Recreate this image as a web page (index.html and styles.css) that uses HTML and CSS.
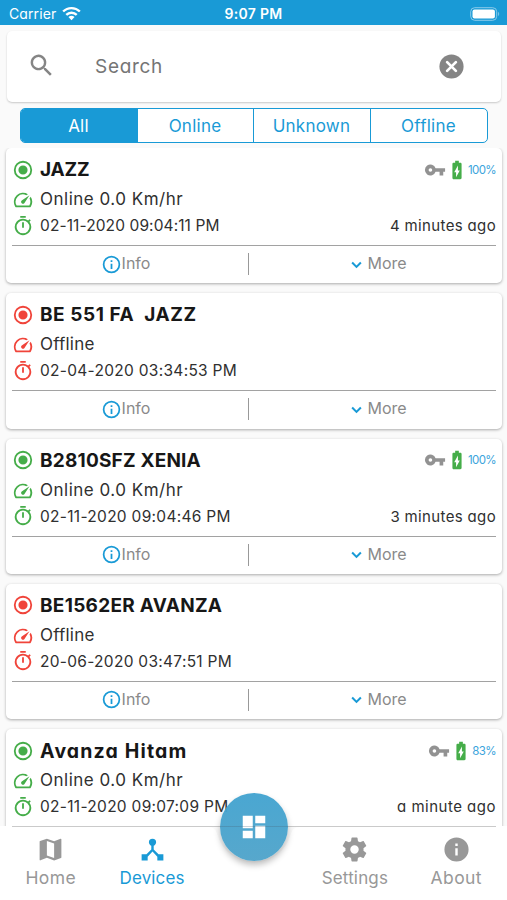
FILE: index.html
```html
<!DOCTYPE html>
<html lang="en">
<head>
<meta charset="utf-8">
<title>Devices</title>
<link rel="stylesheet" href="styles.css">
</head>
<body>
<svg class="defs" width="0" height="0" aria-hidden="true">
  <symbol id="radio" viewBox="0 0 24 24"><path d="M12 7a5 5 0 1 0 0 10 5 5 0 0 0 0-10zm0-5a10 10 0 1 0 0 20 10 10 0 0 0 0-20zm0 18a8 8 0 1 1 0-16 8 8 0 0 1 0 16z" fill-rule="evenodd"/></symbol>
  <symbol id="speed" viewBox="0 0 24 24"><path d="M20.38 8.57l-1.23 1.85a8 8 0 0 1-.22 7.58H5.07A8 8 0 0 1 15.58 6.85l1.85-1.23A10 10 0 0 0 3.35 19a2 2 0 0 0 1.72 1h13.85a2 2 0 0 0 1.74-1 10 10 0 0 0-.27-10.44zm-9.79 6.84a2 2 0 0 0 2.83 0l5.66-8.49-8.49 5.66a2 2 0 0 0 0 2.83z"/></symbol>
  <symbol id="timer" viewBox="0 0 24 24"><path d="M15 1H9v2h6V1zm-4 13h2V8h-2v6zm8.03-6.61l1.42-1.42c-.43-.51-.9-.99-1.41-1.41l-1.42 1.42A8.96 8.96 0 0 0 12 4a9 9 0 1 0 7.03 3.39zM12 20a7 7 0 1 1 0-14 7 7 0 0 1 0 14z"/></symbol>
  <symbol id="key" viewBox="0 0 24 24"><path d="M12.65 10A6 6 0 1 0 12.65 14H17v4h4v-4h2v-4H12.65zM7 14a2 2 0 1 1 0-4 2 2 0 0 1 0 4z"/></symbol>
  <symbol id="battery" viewBox="0 0 24 24"><path d="M15.67 4H14V2h-4v2H8.33C7.6 4 7 4.6 7 5.33v15.33C7 21.4 7.6 22 8.33 22h7.33c.74 0 1.34-.6 1.34-1.33V5.33C17 4.6 16.4 4 15.67 4zM11 20v-5.5H9L13 7v5.5h2L11 20z"/></symbol>
  <symbol id="info" viewBox="0 0 24 24"><path d="M11 7h2v2h-2zm0 4h2v6h-2zm1-9a10 10 0 1 0 0 20 10 10 0 0 0 0-20zm0 18a8 8 0 1 1 0-16 8 8 0 0 1 0 16z"/></symbol>
  <symbol id="chevron" viewBox="0 0 24 24"><path d="M7 9.8l5 5 5-5" fill="none" stroke="currentColor" stroke-width="2.3"/></symbol>
</svg>

<div class="screen">
  <header class="status">
    <div class="carrier"><span>Carrier</span>
      <svg class="wifi" viewBox="0 0 20 15"><g fill="none" stroke="#fff" stroke-width="2.5"><path d="M1.2 5.4a12.5 12.5 0 0 1 17.6 0"/><path d="M4.5 9a7.8 7.8 0 0 1 11 0"/></g><path fill="#fff" d="M10 14.6L6.8 11.3a4.6 4.6 0 0 1 6.4 0z"/></svg>
    </div>
    <div class="clock">9:07 PM</div>
    <svg class="power" viewBox="0 0 30 14"><rect x=".7" y=".7" width="26" height="12.6" rx="4" fill="none" stroke="#8ccbea" stroke-width="1"/><rect x="2.5" y="2.5" width="22.4" height="9" rx="2" fill="#fff"/><path d="M28.2 4.8q2 2.2 0 4.4z" fill="#8ccbea"/></svg>
  </header>

  <div class="search">
    <svg class="magnifier" viewBox="0 0 24 24"><path d="M15.5 14h-.79l-.28-.27A6.5 6.5 0 1 0 13.73 14.43l.27.28v.79l5 4.99L20.49 19l-4.99-5zm-6 0a4.5 4.5 0 1 1 0-9 4.5 4.5 0 0 1 0 9z"/></svg>
    <span class="placeholder">Search</span>
    <svg class="clear" viewBox="0 0 24 24"><circle cx="12" cy="12" r="11.6" fill="#858585"/><path d="M7.8 7.8l8.4 8.4M16.2 7.8l-8.4 8.4" stroke="#fff" stroke-width="2.6" stroke-linecap="round"/></svg>
  </div>

  <div class="tabs">
    <div class="tab active"><span>All</span></div>
    <div class="tab"><span>Online</span></div>
    <div class="tab"><span>Unknown</span></div>
    <div class="tab"><span>Offline</span></div>
  </div>

  <main class="list">
    <article class="card online">
      <div class="row title"><svg><use href="#radio"/></svg><h2 class="n1">JAZZ</h2><div class="meta"><svg class="key"><use href="#key"/></svg><svg class="battery"><use href="#battery"/></svg><span>100%</span></div></div>
      <div class="row speed"><svg><use href="#speed"/></svg><span>Online 0.0 Km/hr</span></div>
      <div class="row date"><svg><use href="#timer"/></svg><span class="d1">02-11-2020 09:04:11 PM</span><span class="ago">4 minutes ago</span></div>
      <div class="actions"><div class="action"><svg class="i"><use href="#info"/></svg><span>Info</span></div><div class="action"><svg class="c"><use href="#chevron"/></svg><span>More</span></div></div>
    </article>
    <article class="card offline">
      <div class="row title"><svg><use href="#radio"/></svg><h2 class="n2">BE 551 FA&nbsp; JAZZ</h2></div>
      <div class="row speed"><svg><use href="#speed"/></svg><span>Offline</span></div>
      <div class="row date"><svg><use href="#timer"/></svg><span>02-04-2020 03:34:53 PM</span></div>
      <div class="actions"><div class="action"><svg class="i"><use href="#info"/></svg><span>Info</span></div><div class="action"><svg class="c"><use href="#chevron"/></svg><span>More</span></div></div>
    </article>
    <article class="card online">
      <div class="row title"><svg><use href="#radio"/></svg><h2 class="n3">B2810SFZ XENIA</h2><div class="meta"><svg class="key"><use href="#key"/></svg><svg class="battery"><use href="#battery"/></svg><span>100%</span></div></div>
      <div class="row speed"><svg><use href="#speed"/></svg><span>Online 0.0 Km/hr</span></div>
      <div class="row date"><svg><use href="#timer"/></svg><span>02-11-2020 09:04:46 PM</span><span class="ago">3 minutes ago</span></div>
      <div class="actions"><div class="action"><svg class="i"><use href="#info"/></svg><span>Info</span></div><div class="action"><svg class="c"><use href="#chevron"/></svg><span>More</span></div></div>
    </article>
    <article class="card offline">
      <div class="row title"><svg><use href="#radio"/></svg><h2 class="n4">BE1562ER AVANZA</h2></div>
      <div class="row speed"><svg><use href="#speed"/></svg><span>Offline</span></div>
      <div class="row date"><svg><use href="#timer"/></svg><span>20-06-2020 03:47:51 PM</span></div>
      <div class="actions"><div class="action"><svg class="i"><use href="#info"/></svg><span>Info</span></div><div class="action"><svg class="c"><use href="#chevron"/></svg><span>More</span></div></div>
    </article>
    <article class="card online">
      <div class="row title"><svg><use href="#radio"/></svg><h2 class="n5">Avanza Hitam</h2><div class="meta"><svg class="key"><use href="#key"/></svg><svg class="battery"><use href="#battery"/></svg><span>83%</span></div></div>
      <div class="row speed"><svg><use href="#speed"/></svg><span>Online 0.0 Km/hr</span></div>
      <div class="row date"><svg><use href="#timer"/></svg><span>02-11-2020 09:07:09 PM</span><span class="ago wide">a minute ago</span></div>
    </article>
  </main>

  <nav class="nav">
    <div class="item"><svg viewBox="0 0 24 24"><path d="M20.5 3l-.16.03L15 5.1 9 3 3.36 4.9c-.21.07-.36.25-.36.48V20.5c0 .28.22.5.5.5l.16-.03L9 18.9l6 2.1 5.64-1.9c.21-.07.36-.25.36-.48V3.5c0-.28-.22-.5-.5-.5zM15 19l-6-2.11V5l6 2.11V19z"/></svg><span class="home">Home</span></div>
    <div class="item current"><svg viewBox="0 0 24 24"><path d="M17 16l-4-4V8.82C14.16 8.4 15 7.3 15 6a3 3 0 1 0-6 0c0 1.3.84 2.4 2 2.82V12l-4 4H3v5h5v-3.05l4-4.2 4 4.2V21h5v-5h-4z"/></svg><span>Devices</span></div>
    <div class="item"></div>
    <div class="item"><svg viewBox="0 0 24 24"><path d="M19.43 12.98c.04-.32.07-.64.07-.98s-.03-.66-.07-.98l2.11-1.65c.19-.15.24-.42.12-.64l-2-3.46c-.12-.22-.39-.3-.61-.22l-2.49 1c-.52-.4-1.08-.73-1.69-.98l-.38-2.65C14.46 2.18 14.25 2 14 2h-4c-.25 0-.46.18-.49.42l-.38 2.65c-.61.25-1.17.59-1.69.98l-2.49-1c-.23-.09-.49 0-.61.22l-2 3.46c-.13.22-.07.49.12.64l2.11 1.65c-.04.32-.07.65-.07.98s.03.66.07.98l-2.11 1.65c-.19.15-.24.42-.12.64l2 3.46c.12.22.39.3.61.22l2.49-1c.52.4 1.08.73 1.69.98l.38 2.65c.03.24.24.42.49.42h4c.25 0 .46-.18.49-.42l.38-2.65c.61-.25 1.17-.59 1.69-.98l2.49 1c.23.09.49 0 .61-.22l2-3.46c.12-.22.07-.49-.12-.64l-2.11-1.65zM12 15.5a3.5 3.5 0 1 1 0-7 3.5 3.5 0 0 1 0 7z"/></svg><span>Settings</span></div>
    <div class="item"><svg viewBox="0 0 24 24"><path d="M12 2a10 10 0 1 0 0 20 10 10 0 0 0 0-20zm1 15h-2v-6h2v6zm0-8h-2V7h2v2z"/></svg><span class="about">About</span></div>
    <svg class="notch" viewBox="0 0 100 50"><path d="M4 0C10 0 12 3 13.500 8A38 38 0 0 0 86.500 8C88 3 90 0 96 0z" fill="#fafafa"/></svg>
    <div class="fab"><svg viewBox="0 0 24 24"><path d="M3 13h8V3H3v10zm0 8h8v-6H3v6zm10 0h8V11h-8v10zm0-18v6h8V3h-8z"/></svg></div>
  </nav>
</div>
</body>
</html>
```

FILE: styles.css
```css
* { box-sizing: border-box; }
body {
  margin: 0;
  background: #fafafa;
  color: #303030;
  font-family: Inter, "Open Sans", sans-serif;
  font-feature-settings: "cv11";
}
svg { display: block; flex: none; fill: currentColor; }
.defs { position: absolute; }
span, h2 { white-space: nowrap; }

.screen {
  width: 507px;
  height: 900px;
  overflow: hidden;
  display: flex;
  flex-direction: column;
}

.status {
  flex: none;
  height: 25px;
  padding: 2px 7px 0 9px;
  background: #199ad6;
  color: #fff;
  display: grid;
  grid-template-columns: 1fr auto 1fr;
  align-items: center;
}
.carrier { display: flex; align-items: center; gap: 6px; font-size: 14px; letter-spacing: .1px; }
.wifi { width: 19px; height: 15px; }
.clock { font-size: 14px; font-weight: 600; letter-spacing: .3px; margin-right: 2px; }
.power { width: 30px; height: 14px; justify-self: end; }

.search {
  flex: none;
  height: 71px;
  margin: 6px 6px 0 7px;
  padding: 0 37px 0 20px;
  border-radius: 5px;
  background: #fff;
  box-shadow: 0 1px 2px rgba(0,0,0,.2);
  display: flex;
  align-items: center;
}
.magnifier { width: 29px; height: 29px; margin-top: -3px; color: #858585; }
.placeholder { margin-left: 39px; font-size: 19px; color: #757575; letter-spacing: .7px; }
.clear { width: 25px; height: 25px; margin-left: auto; fill: none; }

.tabs {
  flex: none;
  height: 35px;
  margin: 6px 19px 5px 20px;
  border: 1px solid #199ad6;
  border-radius: 5px;
  background: #fff;
  color: #199ad6;
  overflow: hidden;
  display: grid;
  grid-template-columns: 116px 116px 117px 1fr;
}
.tab {
  display: flex;
  align-items: center;
  justify-content: center;
  padding-right: 1px;
  font-size: 17px;
  letter-spacing: .25px;
}
.tab + .tab { border-left: 1px solid #199ad6; }
.active { background: #199ad6; color: #fff; }

.list {
  flex: 1;
  min-height: 0;
  overflow: hidden;
  padding: 0 5px 0 6px;
  display: flex;
  flex-direction: column;
  gap: 10px;
}
.card {
  flex: none;
  height: 135.3px;
  padding: 7px 6px 0;
  border-radius: 5px;
  background: #fff;
  box-shadow: 0 1px 3px rgba(0,0,0,.32);
}
.online { --state: #45ad49; }
.offline { --state: #f0443a; }
.row { display: flex; align-items: center; }
.row > svg { width: 22px; height: 22px; color: var(--state); margin-right: 6px; }
.title { height: 29px; }
.speed { height: 30px; font-size: 17px; letter-spacing: .5px; }
.offline .speed { letter-spacing: .2px; }
.speed > svg { position: relative; top: 1px; }
.date { height: 23px; font-size: 15.5px; letter-spacing: .29px; }
.d1 { letter-spacing: .1px; }
h2 { margin: 0; font-size: 19px; font-weight: 700; color: #171717; }
.n1 { letter-spacing: -.2px; }
.n2 { letter-spacing: .55px; }
.n3 { letter-spacing: .2px; }
.n4 { letter-spacing: .28px; }
.n5 { font-size: 19.5px; letter-spacing: 1.15px; }
.meta { margin-left: auto; display: flex; align-items: center; font-size: 11.5px; letter-spacing: -.6px; color: #3ba4dc; }
.key { width: 22px; height: 22px; color: #929292; }
.battery { width: 22px; height: 22px; color: #45ad49; }
.ago { margin-left: auto; font-size: 15px; letter-spacing: .35px; }
.wide { letter-spacing: .5px; }
.actions {
  height: 37px;
  margin-top: 8px;
  border-top: 1px solid #a2a2a2;
  display: grid;
  grid-template-columns: 237px 1fr;
  align-items: center;
}
.action {
  height: 22px;
  display: flex;
  align-items: center;
  justify-content: center;
  padding-bottom: 2px;
  font-size: 16px;
  color: #8a8a8a;
}
.action:first-child { padding-right: 9px; border-right: 1px solid #999; }
.action:last-child { padding-left: 8px; }
.i { width: 21px; height: 21px; margin-top: 2px; color: #199ad6; }
.c { width: 21px; height: 21px; margin-top: 2px; color: #199ad6; }

.nav {
  flex: none;
  position: relative;
  height: 74px;
  background: #fff;
  color: #989898;
  display: grid;
  grid-template-columns: repeat(5, 1fr);
}
.nav::before, .nav::after {
  content: "";
  position: absolute;
  z-index: 1;
  top: 0;
  left: 12px;
  right: 11px;
  height: 1px;
  background: #cacaca;
}
.nav::before { z-index: 0; }
.nav::after { left: 220px; right: 219px; background: rgba(80,110,130,.3); }
.item { display: flex; flex-direction: column; align-items: center; padding-top: 9px; font-size: 17px; letter-spacing: .15px; }
.item svg { width: 29px; height: 29px; }
.item span { line-height: 28px; }
.item .home, .item .about { font-size: 17.5px; letter-spacing: .4px; }
.current { color: #199ad6; }
.notch { position: absolute; left: 204px; top: 1px; width: 100px; height: 50px; }
.fab {
  position: absolute;
  left: 220px;
  top: -33px;
  width: 68px;
  height: 68px;
  border-radius: 50%;
  background: linear-gradient(rgba(64,162,207,.95), rgba(78,163,202,.95));
  box-shadow: 0 4px 6px rgba(0,0,0,.25);
  color: #fff;
  display: flex;
  align-items: center;
  justify-content: center;
}
.fab svg { width: 30px; height: 30px; }
```
